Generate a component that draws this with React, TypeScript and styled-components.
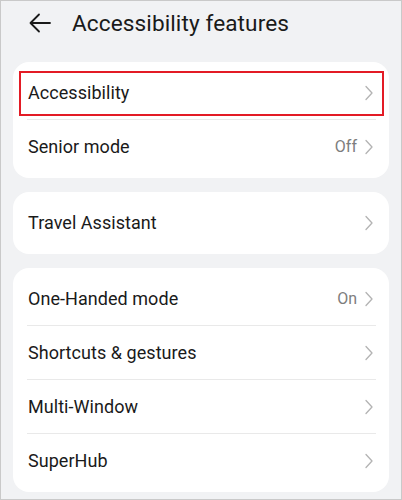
import React from 'react';
import styled, { createGlobalStyle } from 'styled-components';

const GlobalStyle = createGlobalStyle`
  html, body {
    margin: 0;
    padding: 0;
    background: #f1f2f4;
  }
  * {
    box-sizing: border-box;
  }
`;

const Screen = styled.div`
  width: 402px;
  height: 500px;
  background: #f1f2f4;
  border: 1px solid #c9c9c9;
  font-family: Roboto, 'Noto Sans', sans-serif;
  color: #1a1a1a;
  overflow: hidden;
`;

const TopBar = styled.header`
  display: flex;
  align-items: center;
  height: 44px;
  padding-left: 28px;
`;

const BackButton = styled.button`
  display: flex;
  align-items: center;
  justify-content: center;
  width: 22px;
  height: 22px;
  padding: 0;
  margin-right: 21px;
  border: none;
  background: none;
  color: #1a1a1a;
`;

const Title = styled.h1`
  margin: 0;
  font-size: 22.6px;
  font-weight: 400;
  letter-spacing: 0.1px;
`;

const Content = styled.main`
  display: flex;
  flex-direction: column;
  gap: 14px;
  padding: 17px 12px 0 12px;
`;

const Card = styled.section`
  background: #ffffff;
  border-radius: 16px;
  padding: 4px 0 5px;
`;

const Row = styled.div<{ $highlighted?: boolean }>`
  position: relative;
  display: flex;
  align-items: center;
  height: 53px;
  padding: 0 16px 0 15px;

  ${({ $highlighted }) =>
    $highlighted &&
    `
    &::after {
      content: '';
      position: absolute;
      top: 5px;
      bottom: 3px;
      left: 6px;
      right: 5px;
      border: 2px solid #e31b25;
    }
  `}
`;

const Divider = styled.div`
  height: 1px;
  margin: 0 13px 0 14px;
  background: #e9e9e9;
`;

const Label = styled.span`
  flex: 1;
  font-size: 18px;
  letter-spacing: 0.05px;
`;

const Value = styled.span`
  margin-right: 8px;
  font-size: 16px;
  color: #7d7d7d;
`;

const Chevron = () => (
  <svg width="8" height="16" viewBox="0 0 8 16" fill="none">
    <path d="M1 1.5L7 8L1 14.5" stroke="#b3b3b3" strokeWidth="1.3" strokeLinecap="round" strokeLinejoin="round" />
  </svg>
);

const BackArrow = () => (
  <svg width="22" height="20" viewBox="0 0 22 20" fill="none">
    <path d="M21 10H2M10 1.5L1.5 10L10 18.5" stroke="#1a1a1a" strokeWidth="1.8" strokeLinecap="round" strokeLinejoin="round" />
  </svg>
);

type Item = { label: string; value?: string; highlighted?: boolean };

const groups: Item[][] = [
  [{ label: 'Accessibility', highlighted: true }, { label: 'Senior mode', value: 'Off' }],
  [{ label: 'Travel Assistant' }],
  [
    { label: 'One-Handed mode', value: 'On' },
    { label: 'Shortcuts & gestures' },
    { label: 'Multi-Window' },
    { label: 'SuperHub' },
  ],
];

export default function App() {
  return (
    <>
      <GlobalStyle />
      <Screen>
        <TopBar>
          <BackButton aria-label="Back">
            <BackArrow />
          </BackButton>
          <Title>Accessibility features</Title>
        </TopBar>
        <Content>
          {groups.map((items, gi) => (
            <Card key={gi}>
              {items.map((item, i) => (
                <React.Fragment key={item.label}>
                  {i > 0 && <Divider />}
                  <Row $highlighted={item.highlighted}>
                    <Label>{item.label}</Label>
                    {item.value && <Value>{item.value}</Value>}
                    <Chevron />
                  </Row>
                </React.Fragment>
              ))}
            </Card>
          ))}
        </Content>
      </Screen>
    </>
  );
}
